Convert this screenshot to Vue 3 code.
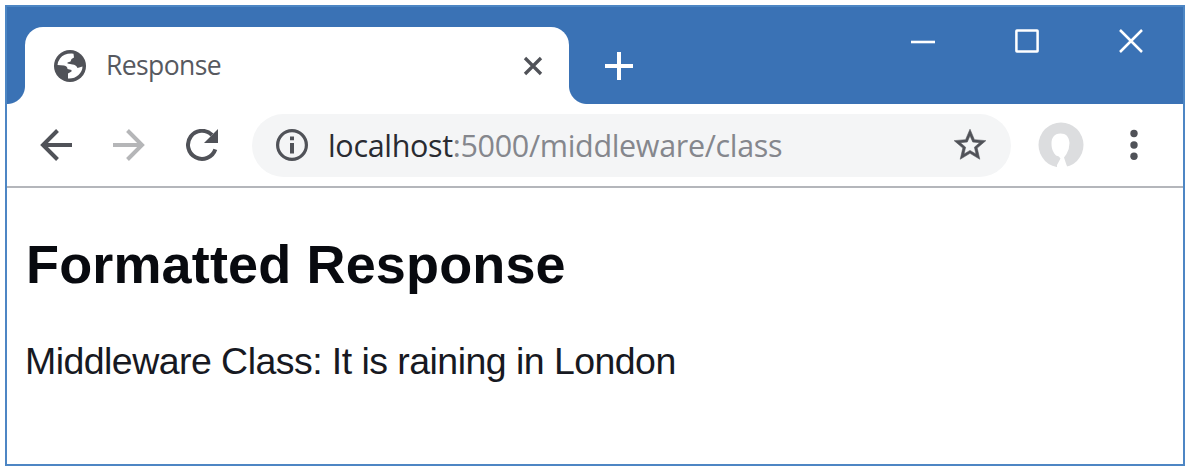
<script setup>
const host = 'localhost'
const path = ':5000/middleware/class'
</script>

<template>
  <div class="window">
    <header class="titlebar">
      <div class="tab">
        <svg class="globe" viewBox="0 0 32 32">
          <circle cx="16" cy="16" r="16" fill="#505258" />
          <path d="M19.500 3.700Q10 3 6 8.500Q3.500 12 3.500 15L10 15.500Q13.500 16 13.500 19L17.500 20V21.500L14 23.500V28.500Q20 29 24.500 25Q28.500 21 28.500 16.500L23.500 18Q22 14.500 18.500 14.500L13.500 13.500V12.500L16.500 11.500L17.500 9L20 7.500Z" fill="#fff" />
        </svg>
        <span class="tab-title">Response</span>
        <svg class="tab-close" viewBox="0 0 20 20"><path d="M2 2 18 18M18 2 2 18" fill="none" stroke="#505258" stroke-width="3.3" /></svg>
      </div>
      <svg class="plus" viewBox="0 0 28 28"><path d="M14 0V28M0 14H28" stroke="#fff" stroke-width="4" /></svg>
      <div class="controls">
        <svg viewBox="0 0 24 24"><path d="M0 13H24" stroke="#fff" stroke-width="2.6" /></svg>
        <svg viewBox="0 0 24 24"><rect x="1.4" y="1.4" width="21.2" height="21.2" rx=".5" fill="none" stroke="#fff" stroke-width="2.5" /></svg>
        <svg viewBox="0 0 24 24"><path d="M1 1 23 23M23 1 1 23" stroke="#fff" stroke-width="2.5" /></svg>
      </div>
    </header>
    <nav class="toolbar">
      <svg class="back" viewBox="0 0 32 32"><path d="M32 16H3M17.5 1.5 3 16 17.5 30.5" fill="none" stroke="#505258" stroke-width="4" /></svg>
      <svg class="forward" viewBox="0 0 32 32"><path d="M0 16H29M14.5 1.5 29 16 14.5 30.5" fill="none" stroke="#b5b6b8" stroke-width="4" /></svg>
      <svg class="reload" viewBox="0 0 32 32">
        <path d="M29.3 20.3A14 14 0 1 1 26 6" fill="none" stroke="#505258" stroke-width="4" />
        <path d="M32 0V14H18Z" fill="#505258" />
      </svg>
      <div class="omnibox">
        <svg class="info" viewBox="0 0 32 32">
          <circle cx="16" cy="16" r="14.4" fill="none" stroke="#505258" stroke-width="3.2" />
          <path d="M16 7.5V11.2M16 14V24.5" stroke="#505258" stroke-width="4" />
        </svg>
        <span class="url"><span class="host">{{ host }}</span>{{ path }}</span>
        <svg class="star" viewBox="0 0 24 24"><path d="M22 9.24l-7.19-.62L12 2 9.19 8.63 2 9.24l5.46 4.73L5.82 21 12 17.27 18.18 21l-1.63-7.03L22 9.24zM12 15.4l-3.76 2.27 1-4.28-3.32-2.88 4.38-.38L12 6.1l1.71 4.04 4.38.38-3.32 2.88 1 4.28L12 15.4z" fill="#505258" stroke="#505258" stroke-width=".35" /></svg>
      </div>
      <svg class="avatar" viewBox="0 0 46 46">
        <circle cx="23" cy="23" r="22.5" fill="#dcdddf" />
        <path d="M22.5 11.5C16 11.5 13.500 16 13.500 21.500C13.500 27 15 30 18 33.500Q21.500 34 22.500 36.500L19 43V46H30L28.500 43L26 35.500L28.500 32Q31.500 27 31.500 21C31 14.500 28 11.500 22.500 11.500Z" fill="#fff" />
      </svg>
      <svg class="menu" viewBox="0 0 8 32"><g fill="#505258"><circle cx="4" cy="4.500" r="3.700" /><circle cx="4" cy="16" r="3.700" /><circle cx="4" cy="27.200" r="3.700" /></g></svg>
    </nav>
    <main class="page">
      <h1>Formatted Response</h1>
      <p>Middleware Class: It is raining in London</p>
    </main>
  </div>
</template>

<style>
body { background: #fff; }
</style>

<style scoped>
.window {
  box-sizing: border-box;
  width: 1180px;
  height: 461px;
  margin: 5px 0 0 5px;
  border: 2px solid #4d86c4;
  background: #fff;
  overflow: hidden;
}
svg { display: block; flex: none; }
.titlebar {
  display: flex;
  height: 97px;
  background: #3a72b5;
  align-items: flex-start;
}
.tab {
  position: relative;
  box-sizing: border-box;
  display: flex;
  align-items: center;
  width: 544px;
  height: 77px;
  margin: 20px 0 0 18px;
  padding: 0 26px 0 29px;
  border-radius: 18px 18px 0 0;
  background: #fff;
}
.tab::before, .tab::after {
  content: "";
  position: absolute;
  bottom: 0;
  width: 18px;
  height: 18px;
}
.tab::before { left: -18px; background: radial-gradient(circle at 0 0, transparent 17.5px, #fff 18.5px); }
.tab::after { right: -18px; background: radial-gradient(circle at 100% 0, transparent 17.5px, #fff 18.5px); }
.globe { width: 32px; height: 32px; }
.tab-title {
  margin-left: 20px;
  padding-bottom: 2px;
  flex: 1;
  font: 26.5px "Open Sans", sans-serif;
  letter-spacing: -.6px;
  color: #57595f;
}
.tab-close { width: 20px; height: 20px; }
.plus { width: 28px; height: 28px; margin: 45px 0 0 36px; }
.controls { display: flex; gap: 80px; margin: 22px 40px 0 auto; }
.controls svg { width: 24px; height: 24px; }
.toolbar {
  display: flex;
  align-items: center;
  box-sizing: border-box;
  height: 84px;
  padding: 0 0 0 33px;
  border-bottom: 2px solid #b4b6bb;
}
.back, .forward, .reload { width: 32px; height: 32px; }
.forward { margin-left: 41px; }
.reload { margin-left: 41px; }
.omnibox {
  box-sizing: border-box;
  display: flex;
  align-items: center;
  width: 759px;
  height: 63px;
  margin-left: 34px;
  padding: 0 24px;
  border-radius: 32px;
  background: #f4f5f6;
}
.info { width: 32px; height: 32px; }
.url {
  flex: 1;
  margin-left: 20px;
  padding-bottom: 1px;
  font: 30.5px "Open Sans", sans-serif;
  letter-spacing: -.33px;
  color: #85878d;
  white-space: nowrap;
}
.host { color: #292b31; }
.star { width: 38px; height: 38px; margin-right: -2px; }
.avatar { width: 46px; height: 46px; margin-left: 27px; }
.menu { width: 8px; height: 32px; margin-left: 46px; }
.page {
  padding: 45px 18px 0;
  font-family: "Liberation Sans", Arial, sans-serif;
  color: #080a0f;
}
h1 { margin: 0 0 0 1px; font-size: 54px; line-height: 62px; font-weight: 700; letter-spacing: .15px; }
p { margin: 45px 0 0; font-size: 37.5px; line-height: 42px; letter-spacing: -.55px; white-space: nowrap; color: #171922; }
</style>
